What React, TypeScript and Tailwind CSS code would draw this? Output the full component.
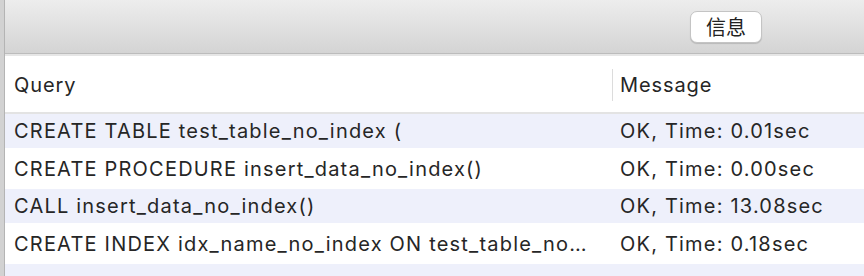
import React from "react";

const ROWS = [
  { query: "CREATE TABLE test_table_no_index (", message: "OK, Time: 0.01sec" },
  { query: "CREATE PROCEDURE insert_data_no_index()", message: "OK, Time: 0.00sec" },
  { query: "CALL insert_data_no_index()", message: "OK, Time: 13.08sec" },
  // already clipped the way the table column shows it
  { query: "CREATE INDEX idx_name_no_index ON test_table_no…", message: "OK, Time: 0.18sec" },
];

export default function App() {
  return (
    <div
      className="flex h-[276px] w-[864px] overflow-hidden bg-white text-[#262626]"
      style={{ fontFamily: 'Inter, "Noto Sans CJK SC", sans-serif' }}
    >
      {/* left window edge */}
      <div className="w-[5px] shrink-0 border-r border-[#b4b4b4] bg-[#d2d2d2]" />

      <div className="flex min-w-0 flex-1 flex-col">
        {/* toolbar */}
        <div className="flex h-[54px] shrink-0 items-center justify-end border-b border-[#bcbcbc] bg-gradient-to-b from-[#ededed] to-[#d4d4d4] pr-[102px]">
          <button
            type="button"
            className="flex h-[32px] w-[72px] items-center justify-center rounded-[7px] border border-[#c4c4c4] bg-white text-[20px] text-[#222] shadow-[0_1px_1px_rgba(0,0,0,0.15)]"
            style={{ fontFamily: '"Noto Sans CJK SC", sans-serif' }}
          >
            信息
          </button>
        </div>
        <div className="h-[2px] shrink-0 bg-[#e6e6e6]" />

        {/* column header */}
        <div className="flex h-[58px] shrink-0 items-center border-b-[2px] border-[#e3e3e3] pt-[2px] text-[20px] tracking-[0.9px]">
          <div className="w-[607px] shrink-0 pl-[9px]">Query</div>
          <div className="h-[32px] w-px bg-[#dcdcdc]" />
          <div className="pl-[7px]">Message</div>
        </div>

        {/* rows */}
        {ROWS.map((r, i) => (
          <div
            key={i}
            className={`flex shrink-0 items-center text-[20px] tracking-[1.2px] ${
              i % 2 === 0 ? "h-[34px] bg-[#eef0fb]" : "h-[41px] bg-white"
            }`}
          >
            <div className="w-[594px] shrink-0 whitespace-nowrap pl-[9px]">{r.query}</div>
            <div className="pl-[21px]">{r.message}</div>
          </div>
        ))}
        <div className="flex-1 bg-[#eef0fb]" />
      </div>
    </div>
  );
}
